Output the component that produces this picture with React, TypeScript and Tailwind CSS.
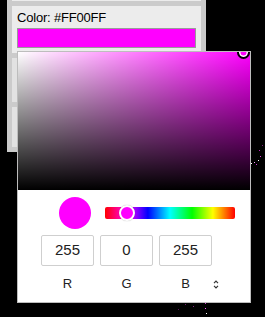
import React from 'react';

const dots: { x: number; y: number; c: string }[] = [
  { x: 259, y: 150, c: '#c02bc0' },
  { x: 260, y: 156, c: '#e040e0' },
  { x: 258, y: 160, c: '#ffffff' },
  { x: 254, y: 162, c: '#f0a0f0' },
  { x: 251, y: 163, c: '#ffffff' },
  { x: 256, y: 164, c: '#d030d0' },
  { x: 262, y: 145, c: '#802080' },
  { x: 185, y: 304, c: '#701a70' },
  { x: 193, y: 306, c: '#8a2a8a' },
  { x: 205, y: 303, c: '#d040d0' },
  { x: 205, y: 308, c: '#ff60ff' },
  { x: 206, y: 313, c: '#ffffff' },
  { x: 178, y: 309, c: '#5a145a' },
];

const App: React.FC = () => {
  return (
    <div className="relative w-[265px] h-[317px] bg-black overflow-hidden font-['Liberation_Sans',Arial,sans-serif]">
      {/* Background panel stack */}
      <div className="ml-[7px] w-[199px] bg-[#cbcbcb] px-[5px] pb-[5px] flex flex-col gap-[5px]">
        <div className="h-[1px] bg-[#ececec]" />
        <div className="h-[47px] bg-[#ececec] px-[5px] pt-[4px]">
          <div className="text-[13px] leading-[16px] text-black tracking-[-0.2px]">Color: #FF00FF</div>
          <div className="mt-[2px] h-[20px] bg-[#ff00ff] border border-[#9a9a9a]" />
        </div>
        <div className="h-[44px] bg-[#e2e2e2]" />
        <div className="h-[40px] bg-[#e2e2e2]" />
      </div>

      {/* Colour picker popover */}
      <div className="absolute left-[17px] top-[51px] w-[234px] h-[252px] bg-white border border-[#bdbdbd] flex flex-col">
        <div className="relative h-[138px] bg-[#ff00ff] overflow-hidden">
          <div className="absolute inset-0 bg-[linear-gradient(to_right,#fff,rgba(255,255,255,0))]" />
          <div className="absolute inset-0 bg-[linear-gradient(to_top,#000,rgba(0,0,0,0))]" />
          <div className="absolute left-[219px] top-[-6px] w-[13px] h-[13px] rounded-full bg-[#ff00ff] border-2 border-black shadow-[inset_0_0_0_1.5px_#fff]" />
        </div>

        <div className="pl-[23px]">
          <div className="mt-[7px] flex items-center">
            <div className="ml-[18px] w-[32px] h-[32px] rounded-full bg-[#ff00ff]" />
            <div className="relative ml-[14px] -mt-[1px] w-[130px] h-[12px] rounded-[2px] bg-[linear-gradient(to_right,#f00_0%,#f0f_17%,#00f_33%,#0ff_50%,#0f0_67%,#ff0_83%,#f00_100%)]">
              <div className="absolute left-[14px] top-[-2px] w-[16px] h-[16px] rounded-full bg-[#ff00ff] border-2 border-white shadow-[0_0_1px_rgba(0,0,0,0.35)]" />
            </div>
          </div>

          <div className="mt-[6px] flex gap-[6px] text-[15px] text-[#222]">
            <div className="w-[53px] h-[31px] border border-[#cfcfcf] rounded-[2px] flex items-center justify-center">255</div>
            <div className="w-[53px] h-[31px] border border-[#cfcfcf] rounded-[2px] flex items-center justify-center">0</div>
            <div className="w-[53px] h-[31px] border border-[#cfcfcf] rounded-[2px] flex items-center justify-center">255</div>
          </div>

          <div className="mt-[9px] flex items-center text-[13px] leading-[18px] text-[#222]">
            <div className="w-[53px] text-center">R</div>
            <div className="ml-[6px] w-[53px] text-center">G</div>
            <div className="ml-[6px] w-[53px] text-center">B</div>
            <svg className="ml-[1px]" width="6" height="9" viewBox="0 0 6 9" fill="none" stroke="#333" strokeWidth="1.2">
              <path d="M1 3.2 L3 1.2 L5 3.2" />
              <path d="M1 5.8 L3 7.8 L5 5.8" />
            </svg>
          </div>
        </div>
      </div>

      {dots.map((d, i) => (
        <div
          key={i}
          className="absolute w-[1px] h-[1px]"
          style={{ left: d.x, top: d.y, backgroundColor: d.c }}
        />
      ))}
    </div>
  );
};

export default App;
